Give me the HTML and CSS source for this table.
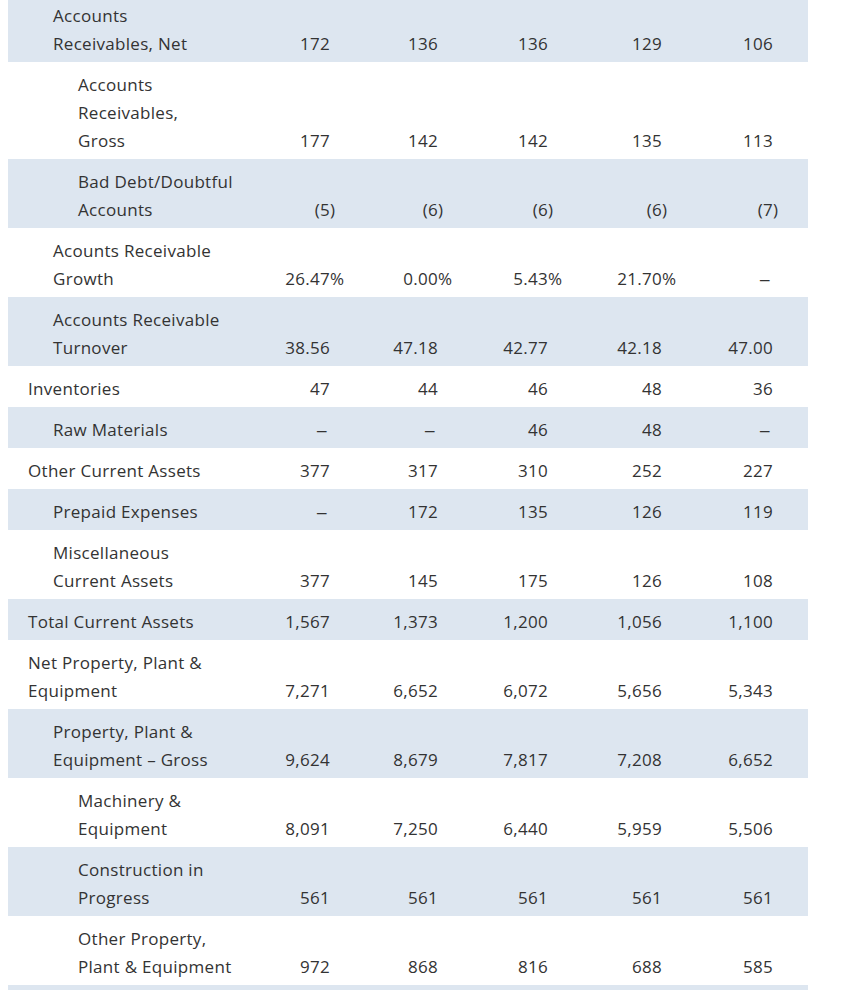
FILE: index.html
```html
<!DOCTYPE html>
<html lang="en">
<head>
<meta charset="utf-8">
<title>Balance Sheet</title>
<link rel="stylesheet" href="styles.css">
</head>
<body>
<div class="sheet">
<table class="fin">
<colgroup>
<col class="c-label"><col class="c-y1"><col class="c-y2"><col class="c-y3"><col class="c-y4"><col class="c-y5">
</colgroup>
<tbody>
<tr><td class="lbl l1">Accounts<br>Receivables, Net</td><td class="num">172</td><td class="num">136</td><td class="num">136</td><td class="num">129</td><td class="num">106</td></tr>
<tr><td class="lbl l2">Accounts<br>Receivables,<br>Gross</td><td class="num">177</td><td class="num">142</td><td class="num">142</td><td class="num">135</td><td class="num">113</td></tr>
<tr><td class="lbl l2">Bad Debt/Doubtful<br>Accounts</td><td class="num">(5<span class="hang">)</span></td><td class="num">(6<span class="hang">)</span></td><td class="num">(6<span class="hang">)</span></td><td class="num">(6<span class="hang">)</span></td><td class="num">(7<span class="hang">)</span></td></tr>
<tr><td class="lbl l1">Acounts Receivable<br>Growth</td><td class="num">26.47<span class="hang">%</span></td><td class="num">0.00<span class="hang">%</span></td><td class="num">5.43<span class="hang">%</span></td><td class="num">21.70<span class="hang">%</span></td><td class="num"><span class="dash">–</span></td></tr>
<tr><td class="lbl l1">Accounts Receivable<br>Turnover</td><td class="num">38.56</td><td class="num">47.18</td><td class="num">42.77</td><td class="num">42.18</td><td class="num">47.00</td></tr>
<tr><td class="lbl l0">Inventories</td><td class="num">47</td><td class="num">44</td><td class="num">46</td><td class="num">48</td><td class="num">36</td></tr>
<tr><td class="lbl l1">Raw Materials</td><td class="num"><span class="dash">–</span></td><td class="num"><span class="dash">–</span></td><td class="num">46</td><td class="num">48</td><td class="num"><span class="dash">–</span></td></tr>
<tr><td class="lbl l0">Other Current Assets</td><td class="num">377</td><td class="num">317</td><td class="num">310</td><td class="num">252</td><td class="num">227</td></tr>
<tr><td class="lbl l1">Prepaid Expenses</td><td class="num"><span class="dash">–</span></td><td class="num">172</td><td class="num">135</td><td class="num">126</td><td class="num">119</td></tr>
<tr><td class="lbl l1">Miscellaneous<br>Current Assets</td><td class="num">377</td><td class="num">145</td><td class="num">175</td><td class="num">126</td><td class="num">108</td></tr>
<tr><td class="lbl l0">Total Current Assets</td><td class="num">1,567</td><td class="num">1,373</td><td class="num">1,200</td><td class="num">1,056</td><td class="num">1,100</td></tr>
<tr><td class="lbl l0">Net Property, Plant &amp;<br>Equipment</td><td class="num">7,271</td><td class="num">6,652</td><td class="num">6,072</td><td class="num">5,656</td><td class="num">5,343</td></tr>
<tr><td class="lbl l1">Property, Plant &amp;<br>Equipment – Gross</td><td class="num">9,624</td><td class="num">8,679</td><td class="num">7,817</td><td class="num">7,208</td><td class="num">6,652</td></tr>
<tr><td class="lbl l2">Machinery &amp;<br>Equipment</td><td class="num">8,091</td><td class="num">7,250</td><td class="num">6,440</td><td class="num">5,959</td><td class="num">5,506</td></tr>
<tr><td class="lbl l2">Construction in<br>Progress</td><td class="num">561</td><td class="num">561</td><td class="num">561</td><td class="num">561</td><td class="num">561</td></tr>
<tr><td class="lbl l2">Other Property,<br>Plant &amp; Equipment</td><td class="num">972</td><td class="num">868</td><td class="num">816</td><td class="num">688</td><td class="num">585</td></tr>
<tr><td class="lbl l1">&nbsp;<br>&nbsp;</td><td class="num"></td><td class="num"></td><td class="num"></td><td class="num"></td><td class="num"></td></tr>
</tbody>
</table>
</div>
</body>
</html>
```

FILE: styles.css
```css
html, body {
  margin: 0;
  padding: 0;
  background: #ffffff;
}

body {
  font-family: "Open Sans", Lato, "Liberation Sans", sans-serif;
  font-size: 17px;
  letter-spacing: 0.3px;
  color: #333333;
}

.sheet {
  margin: -7px 0 0 8px;
  width: 800px;
}

.fin {
  width: 800px;
  table-layout: fixed;
  border-collapse: collapse;
  border-spacing: 0;
}

.c-label { width: 247px; }
.c-y1 { width: 110px; }
.c-y2 { width: 108px; }
.c-y3 { width: 110px; }
.c-y4 { width: 114px; }
.c-y5 { width: 111px; }

.fin td {
  line-height: 28px;
  padding-top: 9px;
  padding-bottom: 4px;
  vertical-align: bottom;
  white-space: nowrap;
}

.fin tr:nth-child(odd) {
  background: #dde6f0;
}

.lbl {
  text-align: left;
  padding-right: 10px;
}

.l0 { padding-left: 20px; }
.l1 { padding-left: 45px; }
.l2 { padding-left: 70px; }

.num {
  text-align: right;
  padding-right: 35px;
}

.hang {
  display: inline-block;
  width: 0;
  text-align: left;
}

.dash {
  display: inline-block;
  transform: scaleX(1.35);
  transform-origin: right center;
  margin-right: 2px;
}
```
